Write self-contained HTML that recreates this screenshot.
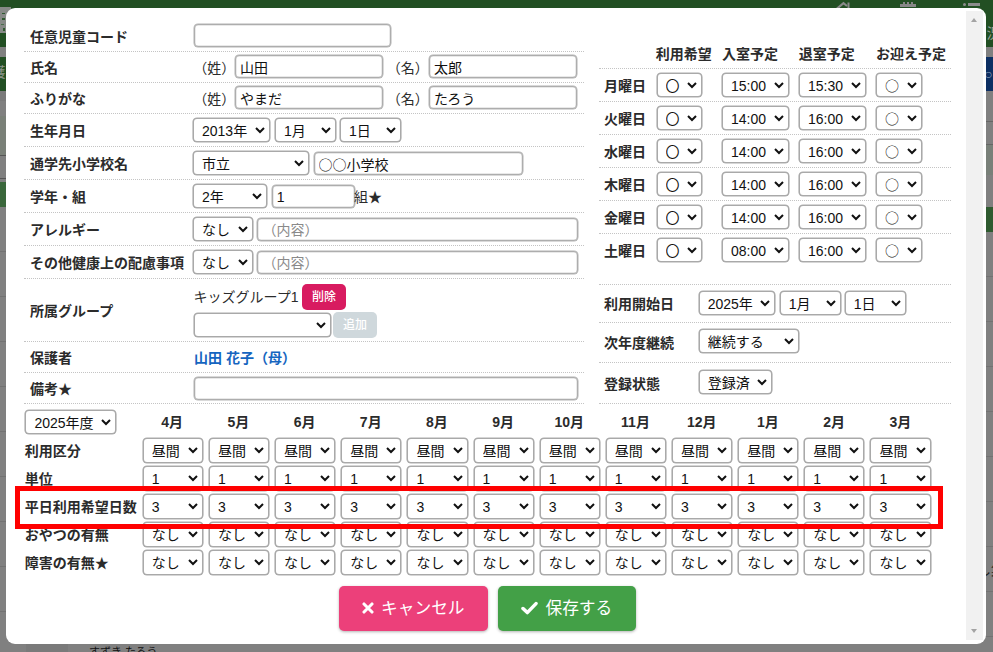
<!DOCTYPE html>
<html lang="ja"><head><meta charset="utf-8"><title>児童情報編集</title>
<style>
html,body{margin:0;padding:0}
body{width:993px;height:652px;overflow:hidden;position:relative;background:#808080;font-family:"Liberation Sans","Noto Sans CJK JP",sans-serif;color:#2b2b2b}
.bg div{position:absolute}
#modal{position:absolute;left:6px;top:7.5px;width:980.2px;height:636.2px;background:#fff;border-radius:9px}
#c{position:absolute;left:0;top:0;width:993px;height:652px}
.t{position:absolute;font-size:14px;line-height:20px;height:20px;white-space:nowrap}
.t.c{text-align:center}
.b{font-weight:bold}
.lnk{color:#1565c0}
.i,.s{position:absolute;box-sizing:border-box;margin:0;font-family:"Liberation Sans","Noto Sans CJK JP",sans-serif;font-size:14px;color:#111;background:#fff;border:1px solid #adadad;border-radius:4px;outline:none;box-shadow:0 0 0 .5px #b4b4b4,inset 0 0 0 .5px #d4d4d4}
.i{padding:1px 4px}
.i::placeholder{color:#8a8a8a;opacity:1}
.s{padding:0 0 0 4px;border:0 solid transparent;border-right-width:1px;border-radius:3px;box-shadow:0 0 0 1px #a9a9a9,0 0 0 1.6px #adadad}
.cj{font-family:"Noto Sans CJK JP",sans-serif}
.hl{position:absolute;height:0;border-top:1px dotted #c4c4c4}
.btn,.big{border:0;margin:0;padding:0;font-family:inherit}
.btn{position:absolute;box-sizing:border-box;border-radius:5px;color:#fff;font-size:12px;font-weight:500;line-height:26px;text-align:center}
.del{background:#d81b60}
.add{background:#cfd8dc;color:#fff}
.red{position:absolute;box-sizing:border-box;border:5px solid #ff0000}
.big{position:absolute;box-sizing:border-box;border-radius:5px;color:#fff;font-size:16.7px;display:flex;align-items:center;justify-content:center;box-shadow:0 1px 3px rgba(0,0,0,.3)}
.big svg{margin-right:7px}
.big span{position:relative;top:-1.5px}
.cancel{background:#ec407a}
.save{background:#43a047}
#sb{position:absolute;left:966px;top:11px;width:17px;height:629px;background:#f1f1f1}
#sb:before,#sb:after{content:"";position:absolute;left:4.8px;border-left:3.7px solid transparent;border-right:3.7px solid transparent}
#sb:before{top:7px;border-bottom:4px solid #a3a3a3}
#sb:after{bottom:7px;border-top:4px solid #a3a3a3}
</style></head><body>
<div class="bg">
<div style="left:0;top:0;width:993px;height:47px;background:#224f23"></div>
<div style="left:0;top:57px;width:12px;height:34px;background:#224f23"></div>
<div style="left:0;top:91px;width:12px;height:10px;background:#7a7a7a"></div>
<div style="left:0;top:116px;width:12px;height:39px;background:#7a8078"></div>
<div style="left:0;top:155px;width:12px;height:1px;background:#555"></div>
<div style="left:0;top:178px;width:12px;height:1px;background:#555"></div>
<div style="left:0;top:182px;width:12px;height:25px;background:#3a673b"></div>
<div style="left:980px;top:57px;width:13px;height:34px;background:#0d2f63"></div>
<div style="left:980px;top:121px;width:13px;height:1px;background:#666"></div>
<div style="left:980px;top:144px;width:13px;height:31px;background:#798079"></div>
<div style="left:980px;top:144px;width:13px;height:1px;background:#666"></div>
<div style="left:980px;top:207px;width:13px;height:25px;background:#2f5b30"></div>
<div style="left:0;top:251px;width:12px;height:1px;background:#727272"></div>
<div style="left:0;top:296px;width:12px;height:1px;background:#727272"></div>
<div style="left:0;top:341px;width:12px;height:1px;background:#727272"></div>
<div style="left:0;top:386px;width:12px;height:1px;background:#727272"></div>
<div style="left:0;top:431px;width:12px;height:1px;background:#727272"></div>
<div style="left:0;top:476px;width:12px;height:1px;background:#727272"></div>
<div style="left:0;top:521px;width:12px;height:1px;background:#727272"></div>
<div style="left:0;top:566px;width:12px;height:1px;background:#727272"></div>
<div style="left:0;top:611px;width:12px;height:1px;background:#727272"></div>
<div style="left:980px;top:276px;width:13px;height:1px;background:#727272"></div>
<div style="left:980px;top:321px;width:13px;height:1px;background:#727272"></div>
<div style="left:980px;top:366px;width:13px;height:1px;background:#727272"></div>
<div style="left:980px;top:411px;width:13px;height:1px;background:#727272"></div>
<div style="left:980px;top:456px;width:13px;height:1px;background:#727272"></div>
<div style="left:980px;top:501px;width:13px;height:1px;background:#727272"></div>
<div style="left:980px;top:546px;width:13px;height:1px;background:#727272"></div>
<div style="left:980px;top:591px;width:13px;height:1px;background:#727272"></div>
<div style="left:980px;top:636px;width:13px;height:1px;background:#727272"></div>
<div style="left:836px;top:1px;width:15px;height:8px;overflow:hidden"><svg style="display:block" width="15" height="8" viewBox="0 0 15 8"><path d="M0.5 8L7.5 2.2L11 5" fill="none" stroke="#8a8a8a" stroke-width="2.2"/><rect x="11.5" y="1.5" width="2" height="7" fill="#8a8a8a"/></svg></div>
<div style="left:899.5px;top:4px;width:16px;height:2.6px;background:#878787"></div>
<div style="left:902.5px;top:2px;width:2.5px;height:3px;background:#878787"></div>
<div style="left:906.5px;top:2px;width:2.5px;height:3px;background:#878787"></div>
<div style="left:910.5px;top:2px;width:2.5px;height:3px;background:#878787"></div>
<div style="left:962.5px;top:3px;width:3px;height:3px;border-radius:2px;background:#8c8c8c"></div>
<div style="left:967.7px;top:3px;width:12.3px;height:2.6px;background:#8c8c8c"></div>
<div style="left:-8.5px;top:62px;font-size:14px;line-height:20px;color:#8d958d">護</div>
<div style="left:986.5px;top:23px;font-size:14px;line-height:20px;color:#9aa29a">況</div>
<div style="left:984px;top:64px;font-size:14px;line-height:20px;color:#93a3bd;white-space:nowrap">○更</div>
<div style="left:0;top:7px;width:11px;height:26px;background:#878a87"></div>
<div style="left:2px;top:12.5px;width:3px;height:1.6px;background:#2f5a30"></div>
<div style="left:1.5px;top:17.5px;width:3px;height:2.6px;background:#2f5a30"></div>
<div style="left:0.5px;top:23.5px;width:3.5px;height:1.2px;background:#4a6e4b"></div>
<div style="left:2.5px;top:27.5px;width:2px;height:3px;background:#2f5a30"></div>
<div style="left:977px;top:559.5px;font-size:14px;line-height:20px;color:#1c1c1c;white-space:nowrap">し集</div>
<div style="left:26px;top:640px;width:42px;height:12px;background:#7a7a7a"></div>
<div style="left:89px;top:644.5px;font-size:11px;line-height:14px;color:#111;white-space:nowrap">すずき たろう</div>
</div>
<div id="modal"></div>
<div id="sb"></div>
<div id="c">
<div class="hl" style="left:24px;top:51px;width:560px"></div>
<div class="hl" style="left:24px;top:82px;width:560px"></div>
<div class="hl" style="left:24px;top:113px;width:560px"></div>
<div class="hl" style="left:24px;top:146px;width:560px"></div>
<div class="hl" style="left:24px;top:179px;width:560px"></div>
<div class="hl" style="left:24px;top:212px;width:560px"></div>
<div class="hl" style="left:24px;top:245px;width:560px"></div>
<div class="hl" style="left:24px;top:278px;width:560px"></div>
<div class="hl" style="left:24px;top:341px;width:560px"></div>
<div class="hl" style="left:24px;top:372px;width:560px"></div>
<div class="hl" style="left:24px;top:403px;width:560px"></div>
<div class="t b" style="left:30px;top:27.30px;">任意児童コード</div>
<input type="text" class="i " style="left:193.6px;top:24.4px;width:197px;height:23px">
<div class="t b" style="left:30px;top:58.30px;">氏名</div>
<div class="t " style="left:193.2px;top:58.30px;">（姓）</div>
<input type="text" class="i " style="left:235px;top:55px;width:148px;height:23px" value="山田">
<div class="t " style="left:386.8px;top:58.30px;">（名）</div>
<input type="text" class="i " style="left:429px;top:55px;width:148px;height:23px" value="太郎">
<div class="t b" style="left:30px;top:89.30px;">ふりがな</div>
<div class="t " style="left:193.2px;top:89.30px;">（姓）</div>
<input type="text" class="i " style="left:235px;top:86px;width:148px;height:23px" value="やまだ">
<div class="t " style="left:386.8px;top:89.30px;">（名）</div>
<input type="text" class="i " style="left:429px;top:86px;width:148px;height:23px" value="たろう">
<div class="t b" style="left:30px;top:121.30px;">生年月日</div>
<select class="s " style="left:194px;top:119px;width:75px;height:22px;padding-top:2px;padding-bottom:0px"><option>2013年</option></select>
<select class="s " style="left:276px;top:119px;width:59px;height:22px;padding-top:2px;padding-bottom:0px"><option>1月</option></select>
<select class="s " style="left:341px;top:119px;width:59px;height:22px;padding-top:2px;padding-bottom:0px"><option>1日</option></select>
<div class="t b" style="left:30px;top:154.30px;">通学先小学校名</div>
<select class="s " style="left:194px;top:152px;width:113.5px;height:22px;padding-top:2px;padding-bottom:0px"><option>市立</option></select>
<input type="text" class="i cj" style="left:313.6px;top:152px;width:209.5px;height:23px" value="○○小学校">
<div class="t b" style="left:30px;top:187.30px;">学年・組</div>
<select class="s " style="left:194px;top:185px;width:71.5px;height:22px;padding-top:2px;padding-bottom:0px"><option>2年</option></select>
<input type="text" class="i " style="left:271.7px;top:185px;width:83.5px;height:23px" value="1">
<div class="t " style="left:354px;top:187.30px;">組★</div>
<div class="t b" style="left:30px;top:220.30px;">アレルギー</div>
<select class="s " style="left:194px;top:218px;width:58px;height:22px;padding-top:2px;padding-bottom:0px"><option>なし</option></select>
<input type="text" class="i " style="left:257.4px;top:218px;width:321px;height:23px" placeholder="（内容）">
<div class="t b" style="left:30px;top:253.30px;">その他健康上の配慮事項</div>
<select class="s " style="left:194px;top:251px;width:58px;height:22px;padding-top:2px;padding-bottom:0px"><option>なし</option></select>
<input type="text" class="i " style="left:257.4px;top:251px;width:321px;height:23px" placeholder="（内容）">
<div class="t b" style="left:30px;top:301.00px;">所属グループ</div>
<div class="t " style="left:193.5px;top:286.50px;">キッズグループ1</div>
<button type="button" class="btn del" style="left:302px;top:284px;width:44px;height:26px">削除</button>
<select class="s " style="left:194.5px;top:314px;width:135px;height:22px;padding-top:2px;padding-bottom:0px"><option></option></select>
<button type="button" disabled class="btn add" style="left:333px;top:312px;width:44px;height:25.5px">追加</button>
<div class="t b" style="left:30px;top:348.00px;">保護者</div>
<div class="t b lnk" style="left:194px;top:348.00px;">山田 花子（母）</div>
<div class="t b" style="left:30px;top:379.00px;">備考★</div>
<input type="text" class="i " style="left:193.6px;top:376.6px;width:384.5px;height:23px">
<div class="hl" style="left:599px;top:68px;width:352px"></div>
<div class="hl" style="left:599px;top:101px;width:352px"></div>
<div class="hl" style="left:599px;top:134px;width:352px"></div>
<div class="hl" style="left:599px;top:167px;width:352px"></div>
<div class="hl" style="left:599px;top:200px;width:352px"></div>
<div class="hl" style="left:599px;top:233px;width:352px"></div>
<div class="t b" style="left:655.8px;top:44.30px;">利用希望</div>
<div class="t b" style="left:722px;top:44.30px;">入室予定</div>
<div class="t b" style="left:798.7px;top:44.30px;">退室予定</div>
<div class="t b" style="left:876px;top:44.30px;">お迎え予定</div>
<div class="t b" style="left:604px;top:75.50px;">月曜日</div>
<select class="s " style="left:657.6px;top:74px;width:43px;height:22px;padding-top:2px;padding-bottom:0px"><option>〇</option></select>
<select class="s " style="left:723px;top:74px;width:65px;height:22px;padding-top:2px;padding-bottom:0px"><option>15:00</option></select>
<select class="s " style="left:800px;top:74px;width:65px;height:22px;padding-top:2px;padding-bottom:0px"><option>15:30</option></select>
<select class="s cj" style="left:877px;top:74px;width:44px;height:22px;padding-top:0px;padding-bottom:0px"><option>○</option></select>
<div class="t b" style="left:604px;top:108.50px;">火曜日</div>
<select class="s " style="left:657.6px;top:107px;width:43px;height:22px;padding-top:2px;padding-bottom:0px"><option>〇</option></select>
<select class="s " style="left:723px;top:107px;width:65px;height:22px;padding-top:2px;padding-bottom:0px"><option>14:00</option></select>
<select class="s " style="left:800px;top:107px;width:65px;height:22px;padding-top:2px;padding-bottom:0px"><option>16:00</option></select>
<select class="s cj" style="left:877px;top:107px;width:44px;height:22px;padding-top:0px;padding-bottom:0px"><option>○</option></select>
<div class="t b" style="left:604px;top:141.50px;">水曜日</div>
<select class="s " style="left:657.6px;top:140px;width:43px;height:22px;padding-top:2px;padding-bottom:0px"><option>〇</option></select>
<select class="s " style="left:723px;top:140px;width:65px;height:22px;padding-top:2px;padding-bottom:0px"><option>14:00</option></select>
<select class="s " style="left:800px;top:140px;width:65px;height:22px;padding-top:2px;padding-bottom:0px"><option>16:00</option></select>
<select class="s cj" style="left:877px;top:140px;width:44px;height:22px;padding-top:0px;padding-bottom:0px"><option>○</option></select>
<div class="t b" style="left:604px;top:174.50px;">木曜日</div>
<select class="s " style="left:657.6px;top:173px;width:43px;height:22px;padding-top:2px;padding-bottom:0px"><option>〇</option></select>
<select class="s " style="left:723px;top:173px;width:65px;height:22px;padding-top:2px;padding-bottom:0px"><option>14:00</option></select>
<select class="s " style="left:800px;top:173px;width:65px;height:22px;padding-top:2px;padding-bottom:0px"><option>16:00</option></select>
<select class="s cj" style="left:877px;top:173px;width:44px;height:22px;padding-top:0px;padding-bottom:0px"><option>○</option></select>
<div class="t b" style="left:604px;top:207.50px;">金曜日</div>
<select class="s " style="left:657.6px;top:206px;width:43px;height:22px;padding-top:2px;padding-bottom:0px"><option>〇</option></select>
<select class="s " style="left:723px;top:206px;width:65px;height:22px;padding-top:2px;padding-bottom:0px"><option>14:00</option></select>
<select class="s " style="left:800px;top:206px;width:65px;height:22px;padding-top:2px;padding-bottom:0px"><option>16:00</option></select>
<select class="s cj" style="left:877px;top:206px;width:44px;height:22px;padding-top:0px;padding-bottom:0px"><option>○</option></select>
<div class="t b" style="left:604px;top:240.50px;">土曜日</div>
<select class="s " style="left:657.6px;top:239px;width:43px;height:22px;padding-top:2px;padding-bottom:0px"><option>〇</option></select>
<select class="s " style="left:723px;top:239px;width:65px;height:22px;padding-top:2px;padding-bottom:0px"><option>08:00</option></select>
<select class="s " style="left:800px;top:239px;width:65px;height:22px;padding-top:2px;padding-bottom:0px"><option>16:00</option></select>
<select class="s cj" style="left:877px;top:239px;width:44px;height:22px;padding-top:0px;padding-bottom:0px"><option>○</option></select>
<div class="hl" style="left:599px;top:284px;width:352px"></div>
<div class="hl" style="left:599px;top:322px;width:352px"></div>
<div class="hl" style="left:599px;top:362px;width:352px"></div>
<div class="hl" style="left:599px;top:403px;width:352px"></div>
<div class="t b" style="left:604px;top:294.00px;">利用開始日</div>
<select class="s " style="left:699.7px;top:292px;width:74.5px;height:22px;padding-top:2px;padding-bottom:0px"><option>2025年</option></select>
<select class="s " style="left:780.7px;top:292px;width:59px;height:22px;padding-top:2px;padding-bottom:0px"><option>1月</option></select>
<select class="s " style="left:845.7px;top:292px;width:59px;height:22px;padding-top:2px;padding-bottom:0px"><option>1日</option></select>
<div class="t b" style="left:604px;top:332.50px;">次年度継続</div>
<select class="s " style="left:699.7px;top:330px;width:98.8px;height:22px;padding-top:2px;padding-bottom:0px"><option>継続する</option></select>
<div class="t b" style="left:604px;top:373.50px;">登録状態</div>
<select class="s " style="left:699.7px;top:371px;width:71px;height:22px;padding-top:2px;padding-bottom:0px"><option>登録済</option></select>
<select class="s " style="left:26.4px;top:411px;width:88.6px;height:22px;padding-top:2px;padding-bottom:0px"><option>2025年度</option></select>
<div class="t c b" style="left:132.20px;width:80px;top:411.60px">4月</div>
<div class="t c b" style="left:198.39px;width:80px;top:411.60px">5月</div>
<div class="t c b" style="left:264.58px;width:80px;top:411.60px">6月</div>
<div class="t c b" style="left:330.77px;width:80px;top:411.60px">7月</div>
<div class="t c b" style="left:396.96px;width:80px;top:411.60px">8月</div>
<div class="t c b" style="left:463.15px;width:80px;top:411.60px">9月</div>
<div class="t c b" style="left:529.34px;width:80px;top:411.60px">10月</div>
<div class="t c b" style="left:595.53px;width:80px;top:411.60px">11月</div>
<div class="t c b" style="left:661.72px;width:80px;top:411.60px">12月</div>
<div class="t c b" style="left:727.91px;width:80px;top:411.60px">1月</div>
<div class="t c b" style="left:794.10px;width:80px;top:411.60px">2月</div>
<div class="t c b" style="left:860.29px;width:80px;top:411.60px">3月</div>
<div class="t b" style="left:24.7px;top:441.00px;">利用区分</div>
<select class="s " style="left:143.8px;top:439px;width:58.2px;height:23px;padding-top:0px;padding-bottom:0px"><option>昼間</option></select>
<select class="s " style="left:209.95px;top:439px;width:58.2px;height:23px;padding-top:0px;padding-bottom:0px"><option>昼間</option></select>
<select class="s " style="left:276.1px;top:439px;width:58.2px;height:23px;padding-top:0px;padding-bottom:0px"><option>昼間</option></select>
<select class="s " style="left:342.25px;top:439px;width:58.2px;height:23px;padding-top:0px;padding-bottom:0px"><option>昼間</option></select>
<select class="s " style="left:408.4px;top:439px;width:58.2px;height:23px;padding-top:0px;padding-bottom:0px"><option>昼間</option></select>
<select class="s " style="left:474.55px;top:439px;width:58.2px;height:23px;padding-top:0px;padding-bottom:0px"><option>昼間</option></select>
<select class="s " style="left:540.7px;top:439px;width:58.2px;height:23px;padding-top:0px;padding-bottom:0px"><option>昼間</option></select>
<select class="s " style="left:606.85px;top:439px;width:58.2px;height:23px;padding-top:0px;padding-bottom:0px"><option>昼間</option></select>
<select class="s " style="left:673px;top:439px;width:58.2px;height:23px;padding-top:0px;padding-bottom:0px"><option>昼間</option></select>
<select class="s " style="left:739.15px;top:439px;width:58.2px;height:23px;padding-top:0px;padding-bottom:0px"><option>昼間</option></select>
<select class="s " style="left:805.3px;top:439px;width:58.2px;height:23px;padding-top:0px;padding-bottom:0px"><option>昼間</option></select>
<select class="s " style="left:871.45px;top:439px;width:58.2px;height:23px;padding-top:0px;padding-bottom:0px"><option>昼間</option></select>
<div class="t b" style="left:24.7px;top:469.00px;">単位</div>
<select class="s " style="left:143.8px;top:467px;width:58.2px;height:23px;padding-top:0px;padding-bottom:0px"><option>1</option></select>
<select class="s " style="left:209.95px;top:467px;width:58.2px;height:23px;padding-top:0px;padding-bottom:0px"><option>1</option></select>
<select class="s " style="left:276.1px;top:467px;width:58.2px;height:23px;padding-top:0px;padding-bottom:0px"><option>1</option></select>
<select class="s " style="left:342.25px;top:467px;width:58.2px;height:23px;padding-top:0px;padding-bottom:0px"><option>1</option></select>
<select class="s " style="left:408.4px;top:467px;width:58.2px;height:23px;padding-top:0px;padding-bottom:0px"><option>1</option></select>
<select class="s " style="left:474.55px;top:467px;width:58.2px;height:23px;padding-top:0px;padding-bottom:0px"><option>1</option></select>
<select class="s " style="left:540.7px;top:467px;width:58.2px;height:23px;padding-top:0px;padding-bottom:0px"><option>1</option></select>
<select class="s " style="left:606.85px;top:467px;width:58.2px;height:23px;padding-top:0px;padding-bottom:0px"><option>1</option></select>
<select class="s " style="left:673px;top:467px;width:58.2px;height:23px;padding-top:0px;padding-bottom:0px"><option>1</option></select>
<select class="s " style="left:739.15px;top:467px;width:58.2px;height:23px;padding-top:0px;padding-bottom:0px"><option>1</option></select>
<select class="s " style="left:805.3px;top:467px;width:58.2px;height:23px;padding-top:0px;padding-bottom:0px"><option>1</option></select>
<select class="s " style="left:871.45px;top:467px;width:58.2px;height:23px;padding-top:0px;padding-bottom:0px"><option>1</option></select>
<div class="t b" style="left:24.7px;top:497.00px;">平日利用希望日数</div>
<select class="s " style="left:143.8px;top:495px;width:58.2px;height:23px;padding-top:0px;padding-bottom:0px"><option>3</option></select>
<select class="s " style="left:209.95px;top:495px;width:58.2px;height:23px;padding-top:0px;padding-bottom:0px"><option>3</option></select>
<select class="s " style="left:276.1px;top:495px;width:58.2px;height:23px;padding-top:0px;padding-bottom:0px"><option>3</option></select>
<select class="s " style="left:342.25px;top:495px;width:58.2px;height:23px;padding-top:0px;padding-bottom:0px"><option>3</option></select>
<select class="s " style="left:408.4px;top:495px;width:58.2px;height:23px;padding-top:0px;padding-bottom:0px"><option>3</option></select>
<select class="s " style="left:474.55px;top:495px;width:58.2px;height:23px;padding-top:0px;padding-bottom:0px"><option>3</option></select>
<select class="s " style="left:540.7px;top:495px;width:58.2px;height:23px;padding-top:0px;padding-bottom:0px"><option>3</option></select>
<select class="s " style="left:606.85px;top:495px;width:58.2px;height:23px;padding-top:0px;padding-bottom:0px"><option>3</option></select>
<select class="s " style="left:673px;top:495px;width:58.2px;height:23px;padding-top:0px;padding-bottom:0px"><option>3</option></select>
<select class="s " style="left:739.15px;top:495px;width:58.2px;height:23px;padding-top:0px;padding-bottom:0px"><option>3</option></select>
<select class="s " style="left:805.3px;top:495px;width:58.2px;height:23px;padding-top:0px;padding-bottom:0px"><option>3</option></select>
<select class="s " style="left:871.45px;top:495px;width:58.2px;height:23px;padding-top:0px;padding-bottom:0px"><option>3</option></select>
<div class="t b" style="left:24.7px;top:525.00px;">おやつの有無</div>
<select class="s " style="left:143.8px;top:523px;width:58.2px;height:23px;padding-top:0px;padding-bottom:0px"><option>なし</option></select>
<select class="s " style="left:209.95px;top:523px;width:58.2px;height:23px;padding-top:0px;padding-bottom:0px"><option>なし</option></select>
<select class="s " style="left:276.1px;top:523px;width:58.2px;height:23px;padding-top:0px;padding-bottom:0px"><option>なし</option></select>
<select class="s " style="left:342.25px;top:523px;width:58.2px;height:23px;padding-top:0px;padding-bottom:0px"><option>なし</option></select>
<select class="s " style="left:408.4px;top:523px;width:58.2px;height:23px;padding-top:0px;padding-bottom:0px"><option>なし</option></select>
<select class="s " style="left:474.55px;top:523px;width:58.2px;height:23px;padding-top:0px;padding-bottom:0px"><option>なし</option></select>
<select class="s " style="left:540.7px;top:523px;width:58.2px;height:23px;padding-top:0px;padding-bottom:0px"><option>なし</option></select>
<select class="s " style="left:606.85px;top:523px;width:58.2px;height:23px;padding-top:0px;padding-bottom:0px"><option>なし</option></select>
<select class="s " style="left:673px;top:523px;width:58.2px;height:23px;padding-top:0px;padding-bottom:0px"><option>なし</option></select>
<select class="s " style="left:739.15px;top:523px;width:58.2px;height:23px;padding-top:0px;padding-bottom:0px"><option>なし</option></select>
<select class="s " style="left:805.3px;top:523px;width:58.2px;height:23px;padding-top:0px;padding-bottom:0px"><option>なし</option></select>
<select class="s " style="left:871.45px;top:523px;width:58.2px;height:23px;padding-top:0px;padding-bottom:0px"><option>なし</option></select>
<div class="t b" style="left:24.7px;top:553.00px;">障害の有無★</div>
<select class="s " style="left:143.8px;top:551px;width:58.2px;height:23px;padding-top:0px;padding-bottom:0px"><option>なし</option></select>
<select class="s " style="left:209.95px;top:551px;width:58.2px;height:23px;padding-top:0px;padding-bottom:0px"><option>なし</option></select>
<select class="s " style="left:276.1px;top:551px;width:58.2px;height:23px;padding-top:0px;padding-bottom:0px"><option>なし</option></select>
<select class="s " style="left:342.25px;top:551px;width:58.2px;height:23px;padding-top:0px;padding-bottom:0px"><option>なし</option></select>
<select class="s " style="left:408.4px;top:551px;width:58.2px;height:23px;padding-top:0px;padding-bottom:0px"><option>なし</option></select>
<select class="s " style="left:474.55px;top:551px;width:58.2px;height:23px;padding-top:0px;padding-bottom:0px"><option>なし</option></select>
<select class="s " style="left:540.7px;top:551px;width:58.2px;height:23px;padding-top:0px;padding-bottom:0px"><option>なし</option></select>
<select class="s " style="left:606.85px;top:551px;width:58.2px;height:23px;padding-top:0px;padding-bottom:0px"><option>なし</option></select>
<select class="s " style="left:673px;top:551px;width:58.2px;height:23px;padding-top:0px;padding-bottom:0px"><option>なし</option></select>
<select class="s " style="left:739.15px;top:551px;width:58.2px;height:23px;padding-top:0px;padding-bottom:0px"><option>なし</option></select>
<select class="s " style="left:805.3px;top:551px;width:58.2px;height:23px;padding-top:0px;padding-bottom:0px"><option>なし</option></select>
<select class="s " style="left:871.45px;top:551px;width:58.2px;height:23px;padding-top:0px;padding-bottom:0px"><option>なし</option></select>
<div class="red" style="left:15px;top:485.5px;width:928.2px;height:43px"></div>
<button type="button" class="big cancel" style="left:338.8px;top:586px;width:149px;height:44.6px"><svg width="12" height="12" viewBox="0 0 12 12"><path d="M2 2L10 10M10 2L2 10" stroke="#fff" stroke-width="3.1" stroke-linecap="round"/></svg><span>キャンセル</span></button>
<button type="button" class="big save" style="left:498px;top:586px;width:137.7px;height:44.6px"><svg width="17" height="14" viewBox="0 0 17 14"><path d="M2 7.5L6.3 11.6L15 2.6" fill="none" stroke="#fff" stroke-width="3.5" stroke-linecap="round" stroke-linejoin="round"/></svg><span>保存する</span></button>
</div>
</body></html>
